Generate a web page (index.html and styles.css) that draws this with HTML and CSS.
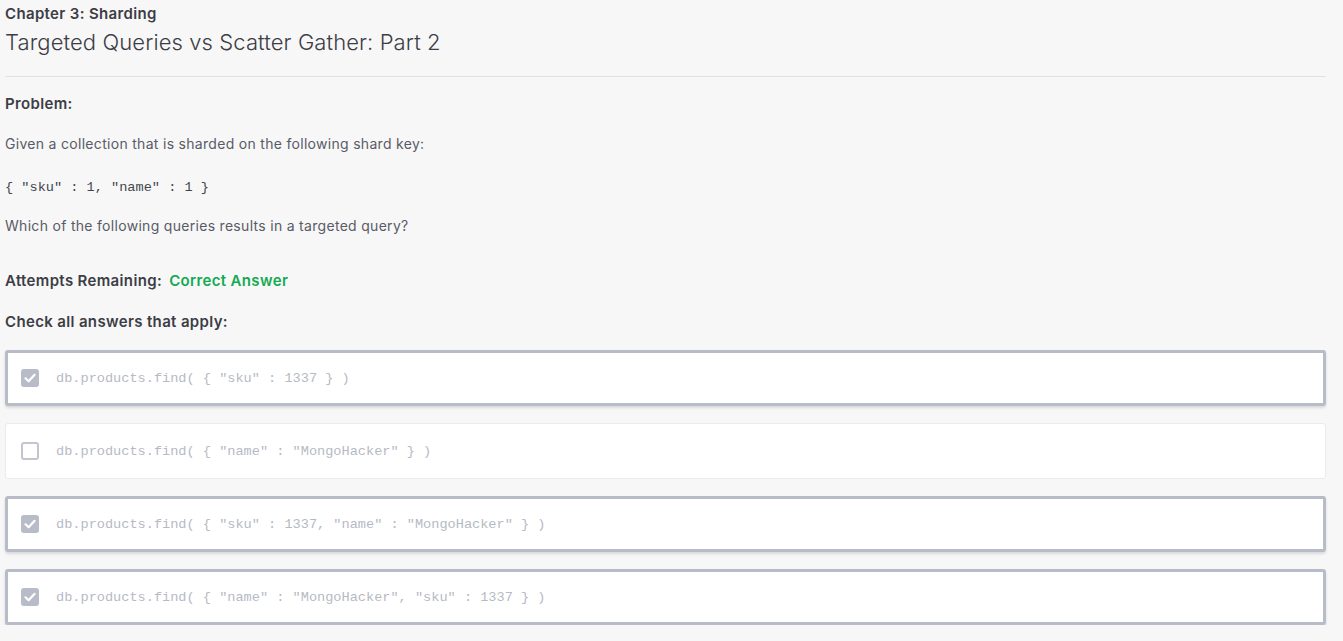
FILE: index.html
```html
<!DOCTYPE html>
<html>
<head>
<meta charset="utf-8">
<link rel="stylesheet" href="styles.css">
</head>
<body>
<div class="page">
  <header class="header">
    <div class="chapter">Chapter 3: Sharding</div>
    <h1 class="title">Targeted Queries vs Scatter Gather: Part 2</h1>
  </header>
  <div class="rule"></div>
  <div class="label problem">Problem:</div>
  <p class="text given">Given a collection that is sharded on the following shard key:</p>
  <p class="code key">{ "sku" : 1, "name" : 1 }</p>
  <p class="text which">Which of the following queries results in a targeted query?</p>
  <div class="label attempts">Attempts Remaining: <span class="correct">Correct Answer</span></div>
  <div class="label check">Check all answers that apply:</div>
  <div class="options">
    <div class="option selected">
      <span class="box checked"><svg viewBox="0 0 18 18" width="18" height="18"><path d="M4.5 9.3 L7.6 12.3 L13.6 5.8" fill="none" stroke="#fff" stroke-width="2.2" stroke-linecap="round" stroke-linejoin="round"/></svg></span>
      <span class="code opt">db.products.find( { "sku" : 1337 } )</span>
    </div>
    <div class="option">
      <span class="box"></span>
      <span class="code opt">db.products.find( { "name" : "MongoHacker" } )</span>
    </div>
    <div class="option selected">
      <span class="box checked"><svg viewBox="0 0 18 18" width="18" height="18"><path d="M4.5 9.3 L7.6 12.3 L13.6 5.8" fill="none" stroke="#fff" stroke-width="2.2" stroke-linecap="round" stroke-linejoin="round"/></svg></span>
      <span class="code opt">db.products.find( { "sku" : 1337, "name" : "MongoHacker" } )</span>
    </div>
    <div class="option selected">
      <span class="box checked"><svg viewBox="0 0 18 18" width="18" height="18"><path d="M4.5 9.3 L7.6 12.3 L13.6 5.8" fill="none" stroke="#fff" stroke-width="2.2" stroke-linecap="round" stroke-linejoin="round"/></svg></span>
      <span class="code opt">db.products.find( { "name" : "MongoHacker", "sku" : 1337 } )</span>
    </div>
  </div>
</div>
</body>
</html>
```

FILE: styles.css
```css
html, body {
  margin: 0;
  padding: 0;
  background: #f7f7f7;
}
body {
  font-family: Inter, "Liberation Sans", Arial, sans-serif;
  color: #494b57;
}
.page {
  padding: 4px 17px 0 5px;
}
.chapter {
  font-size: 15px;
  font-weight: 600;
  letter-spacing: 0.35px;
  line-height: 20px;
  color: #3c3d45;
}
.title {
  margin: 3px 0 0;
  font-size: 22px;
  font-weight: 300;
  letter-spacing: 0.1px;
  line-height: 30px;
  color: #3c3d45;
}
.rule {
  margin-top: 19px;
  height: 1px;
  background: #dde2e2;
}
.label {
  font-size: 15px;
  font-weight: 600;
  letter-spacing: 0.35px;
  line-height: 20px;
  color: #3c3d45;
}
.problem { margin-top: 17px; }
.text {
  margin: 0;
  font-size: 14px;
  letter-spacing: 0.3px;
  line-height: 20px;
  color: #595b66;
}
.given { margin-top: 20px; }
.code {
  font-family: "Liberation Mono", "DejaVu Sans Mono", monospace;
  font-size: 13.6px;
}
.key {
  margin: 24px 0 0;
  line-height: 20px;
  color: #44464f;
}
.which { margin-top: 18px; }
.attempts { margin-top: 35px; }
.correct {
  color: #13aa52;
  margin-left: 3px;
}
.check { margin-top: 21px; }
.options {
  margin-top: 18px;
  display: flex;
  flex-direction: column;
  gap: 17px;
}
.option {
  box-sizing: border-box;
  height: 56px;
  display: flex;
  align-items: center;
  background: #fff;
  border: 1px solid #ebebeb;
  border-radius: 3px;
  padding-left: 15px;
}
.option.selected {
  border: 3px solid #b8bbc8;
  padding-left: 13px;
  box-shadow: 0 2px 3px rgba(0, 0, 0, 0.12);
}
.box {
  box-sizing: border-box;
  width: 18px;
  height: 18px;
  border: 2px solid #c3c6d1;
  border-radius: 3px;
  background: #fff;
  flex: none;
  display: flex;
}
.box.checked {
  border: none;
  background: #b8bbc8;
}
.opt {
  margin-left: 17px;
  color: #b6bac4;
}
```
